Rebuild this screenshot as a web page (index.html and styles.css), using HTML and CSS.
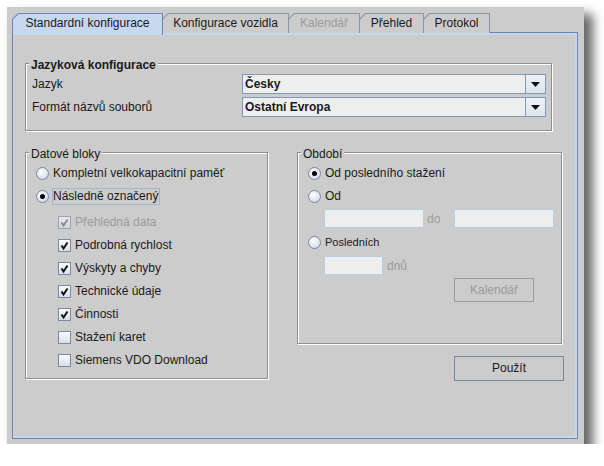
FILE: index.html
```html
<!DOCTYPE html>
<html>
<head>
<meta charset="utf-8">
<link rel="stylesheet" href="styles.css">
</head>
<body>
<div class="window">
  <div class="tabs">
    <div class="tab sel t1"><span>Standardní konfigurace</span></div>
    <div class="tab t2"><span>Konfigurace vozidla</span></div>
    <div class="tab t3 dis"><span>Kalendář</span></div>
    <div class="tab t4"><span>Přehled</span></div>
    <div class="tab t5"><span>Protokol</span></div>
  </div>
  <div class="panel">
    <div class="group lang">
      <div class="gtitle bold">Jazyková konfigurace</div>
      <div class="frow first">
        <span class="flabel">Jazyk</span>
        <div class="combo"><span class="cval">Česky</span><span class="carrow"><svg width="9" height="5" viewBox="0 0 9 5"><polygon points="0,0 9,0 4.5,5" fill="#111"/></svg></span></div>
      </div>
      <div class="frow">
        <span class="flabel">Formát názvů souborů</span>
        <div class="combo"><span class="cval">Ostatní Evropa</span><span class="carrow"><svg width="9" height="5" viewBox="0 0 9 5"><polygon points="0,0 9,0 4.5,5" fill="#111"/></svg></span></div>
      </div>
    </div>
    <div class="lower">
      <div class="group blocks">
        <div class="gtitle">Datové bloky</div>
        <div class="rows">
          <div class="row"><span class="radio"></span><span class="lbl">Kompletní velkokapacitní paměť</span></div>
          <div class="row"><span class="radio on"></span><span class="lbl focus">Následně označený</span></div>
        </div>
        <div class="checks">
          <div class="row"><span class="check dis"><svg width="11" height="11" viewBox="0 0 11 11"><path d="M2.5 5.5 L4.5 8.5 L8.5 2.5" fill="none" stroke="#8c8c8c" stroke-width="2"/></svg></span><span class="lbl grey">Přehledná data</span></div>
          <div class="row"><span class="check"><svg width="11" height="11" viewBox="0 0 11 11"><path d="M2.5 5.5 L4.5 8.5 L8.5 2.5" fill="none" stroke="#111" stroke-width="2"/></svg></span><span class="lbl">Podrobná rychlost</span></div>
          <div class="row"><span class="check"><svg width="11" height="11" viewBox="0 0 11 11"><path d="M2.5 5.5 L4.5 8.5 L8.5 2.5" fill="none" stroke="#111" stroke-width="2"/></svg></span><span class="lbl">Výskyty a chyby</span></div>
          <div class="row"><span class="check"><svg width="11" height="11" viewBox="0 0 11 11"><path d="M2.5 5.5 L4.5 8.5 L8.5 2.5" fill="none" stroke="#111" stroke-width="2"/></svg></span><span class="lbl">Technické údaje</span></div>
          <div class="row"><span class="check"><svg width="11" height="11" viewBox="0 0 11 11"><path d="M2.5 5.5 L4.5 8.5 L8.5 2.5" fill="none" stroke="#111" stroke-width="2"/></svg></span><span class="lbl">Činnosti</span></div>
          <div class="row"><span class="check"></span><span class="lbl">Stažení karet</span></div>
          <div class="row"><span class="check"></span><span class="lbl">Siemens VDO Download</span></div>
        </div>
      </div>
      <div class="rightcol">
        <div class="group period">
          <div class="gtitle">Období</div>
          <div class="rows">
            <div class="row"><span class="radio on"></span><span class="lbl">Od posledního stažení</span></div>
            <div class="row"><span class="radio"></span><span class="lbl">Od</span></div>
          </div>
          <div class="fields r1">
            <span class="field f1"></span><span class="sep grey">do</span><span class="field f2"></span>
          </div>
          <div class="row r3"><span class="radio"></span><span class="lbl small">Posledních</span></div>
          <div class="fields r2">
            <span class="field f3"></span><span class="sep2 grey">dnů</span>
          </div>
          <div class="btnrow"><span class="btn kal">Kalendář</span></div>
        </div>
        <div class="btn apply">Použít</div>
      </div>
    </div>
  </div>
</div>
</body>
</html>
```

FILE: styles.css
```css
body {
  margin: 0;
  background: #ffffff;
  font-family: "Liberation Sans", Arial, sans-serif;
  font-size: 12px;
  color: #1a1a1a;
}

.window {
  margin: 7px 0 0 7px;
  width: 577px;
  height: 437px;
  box-sizing: border-box;
  padding: 6px 0 0 5px;
  background: #cccccc;
  box-shadow: 8px 8px 10px 1px rgba(0, 0, 0, 0.6);
}

.tabs {
  display: flex;
  align-items: flex-start;
  height: 20px;
}

.tab {
  box-sizing: border-box;
  height: 20px;
  padding: 1px 1px 0 1px;
  background: #8a95a8;
  clip-path: polygon(6px 0, 100% 0, 100% 100%, 0 100%, 0 6px);
  margin-right: -1px;
}

.tab span {
  display: block;
  height: 100%;
  background: #cccccc;
  clip-path: polygon(5.5px 0, 100% 0, 100% 100%, 0 100%, 0 5.5px);
  text-align: center;
  line-height: 18px;
  white-space: nowrap;
}

.tab.sel {
  height: 22px;
  background: #6d86b3;
  position: relative;
  z-index: 1;
}

.tab.sel span {
  background: #c6d8ee;
}

.tab.dis span {
  color: #9c9c9c;
}

.t1 { width: 151px; }
.t2 { width: 127px; }
.t3 { width: 72px; }
.t4 { width: 65px; }
.t5 { width: 67px; }

.panel {
  margin-top: -1px;
  width: 566px;
  height: 407px;
  box-sizing: border-box;
  border: 1px solid #6e84ab;
  box-shadow: inset 0 2px 0 #c4d7ee, inset -2px -2px 0 #c4d7ee;
  padding: 30px 0 0 12px;
}

.group {
  box-sizing: border-box;
  border: 1px solid #8e8e8e;
  box-shadow: inset 1px 1px 0 #ffffff, 1px 1px 0 #ffffff;
}

.gtitle {
  width: fit-content;
  margin: -6px 0 0 3px;
  padding: 0 2px;
  background: #cccccc;
  line-height: 14px;
  white-space: nowrap;
}

.bold {
  font-weight: bold;
}

.lang {
  width: 527px;
  height: 68px;
}

.frow {
  display: flex;
  align-items: center;
  height: 20px;
  padding-left: 6px;
  margin-top: 3px;
}

.frow.first {
  margin-top: 2px;
}

.flabel {
  width: 210px;
  flex: none;
}

.combo {
  display: flex;
  width: 304px;
  height: 20px;
  box-sizing: border-box;
  border: 1px solid #7d9bb8;
  background: #eeeeee;
}

.cval {
  flex: 1;
  font-weight: bold;
  padding-left: 2px;
  line-height: 18px;
}

.carrow {
  width: 19px;
  border-left: 1px solid #7d9bb8;
  background: linear-gradient(#eef2f6, #dce4ed);
  display: flex;
  align-items: center;
  justify-content: center;
}

.lower {
  display: flex;
  align-items: flex-start;
  margin-top: 21px;
}

.blocks {
  width: 243px;
  height: 227px;
}

.rightcol {
  margin-left: 29px;
}

.period {
  width: 265px;
  height: 192px;
}

.rows {
  margin-top: 1px;
  padding-left: 10px;
}

.row {
  display: flex;
  align-items: center;
  height: 23px;
}

.checks {
  margin-top: 3px;
  padding-left: 32px;
}

.radio {
  flex: none;
  width: 13px;
  height: 13px;
  box-sizing: border-box;
  border: 1px solid #7a8aa6;
  border-radius: 50%;
  background: radial-gradient(circle at 40% 35%, #ffffff, #c6d1de);
  margin-right: 3px;
  display: flex;
  align-items: center;
  justify-content: center;
}

.radio.on::after {
  content: "";
  width: 5px;
  height: 5px;
  border-radius: 50%;
  background: #000000;
}

.check {
  flex: none;
  width: 13px;
  height: 13px;
  box-sizing: border-box;
  border: 1px solid #7a8aa6;
  background: linear-gradient(#fbfcfd, #d6dfe9);
  margin-right: 3px;
  display: flex;
}

.check.dis {
  border-color: #9ca3ae;
  background: linear-gradient(#e4e7eb, #d2d6dc);
}

.lbl {
  border: 1px solid transparent;
  line-height: 15px;
  padding-right: 1px;
  white-space: nowrap;
}

.lbl.focus {
  border-color: #a3b7cd;
}

.lbl.small {
  font-size: 11px;
}

.grey {
  color: #9c9c9c;
}

.fields {
  display: flex;
  align-items: center;
  padding-left: 26px;
}

.fields.r1 {
  margin-top: 1px;
}

.fields.r2 {
  margin-top: 2px;
}

.row.r3 {
  margin-top: 3px;
  padding-left: 10px;
}

.field {
  height: 19px;
  box-sizing: border-box;
  border: 1px solid #b8cee6;
  background: #eeeeee;
}

.f1, .f2 {
  width: 100px;
}

.f3 {
  width: 59px;
}

.sep {
  width: 27px;
  margin-left: 3px;
}

.sep2 {
  margin-left: 4px;
}

.btnrow {
  margin-top: 3px;
  padding-left: 156px;
  display: flex;
}

.btn {
  box-sizing: border-box;
  text-align: center;
}

.kal {
  width: 80px;
  height: 24px;
  border: 1px solid #9c9c9c;
  color: #9c9c9c;
  line-height: 22px;
}

.apply {
  margin: 12px 0 0 157px;
  width: 110px;
  height: 25px;
  border: 1px solid #7a889e;
  line-height: 23px;
}
```
